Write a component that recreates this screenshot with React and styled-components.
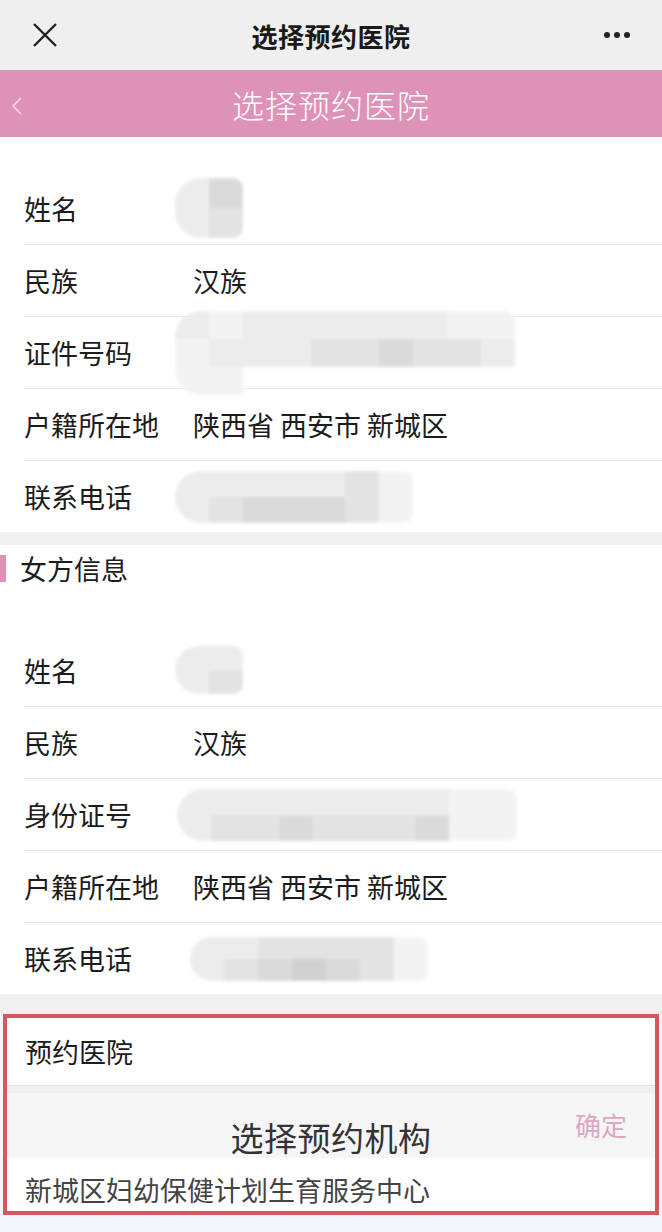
import React from "react"
import styled, { createGlobalStyle } from "styled-components"

const GlobalStyle = createGlobalStyle`
    body {
        margin: 0;
        background: #ffffff;
        font-family: "Noto Sans CJK SC", "Noto Sans", sans-serif;
        color: #222;
    }
    * {
        box-sizing: border-box;
    }
`

const Page = styled.div`
    width: 662px;
    height: 1232px;
    overflow: hidden;
    background: #f3f5f9;
    display: flex;
    flex-direction: column;
`

const TopBar = styled.div`
    height: 70px;
    background: #efefef;
    display: flex;
    align-items: center;
    justify-content: space-between;
    padding: 0 32px 0 32px;
    flex-shrink: 0;
`

const TopTitle = styled.div`
    font-size: 26px;
    font-weight: 700;
    color: #1a1a1a;
    letter-spacing: 0.5px;
`

const Dots = styled.div`
    display: flex;
    gap: 4px;
    width: 26px;
    span {
        width: 6px;
        height: 6px;
        border-radius: 50%;
        background: #222;
    }
`

const PinkBar = styled.div`
    height: 67px;
    background: #df92b8;
    display: flex;
    align-items: center;
    position: relative;
    flex-shrink: 0;
`

const PinkTitle = styled.div`
    flex: 1;
    text-align: center;
    color: #fff;
    font-size: 32px;
    font-weight: 300;
    letter-spacing: 1px;
`

const BackArrow = styled.svg`
    position: absolute;
    left: 11px;
    top: 27px;
`

const Section = styled.div`
    background: #fff;
    padding-top: ${p => p.$top || 0}px;
    flex-shrink: 0;
`

const Gap = styled.div`
    height: ${p => p.$h}px;
    background: #f0f0f0;
    flex-shrink: 0;
`

const Row = styled.div`
    display: flex;
    align-items: center;
    height: 72px;
    margin-left: 24px;
    & + & {
        border-top: 1px solid #e8e8e8;
    }
`

const Label = styled.div`
    width: 169px;
    font-size: 27px;
    color: #1c1c1c;
    flex-shrink: 0;
`

const Value = styled.div`
    font-size: 27px;
    color: #1c1c1c;
`

const SectionHead = styled.div`
    display: flex;
    align-items: center;
    height: 46px;
    gap: 14px;
    font-size: 27px;
    color: #1c1c1c;
    &::before {
        content: "";
        width: 6px;
        height: 27px;
        background: #df92b8;
    }
`

const HeadSpacer = styled.div`
    height: 43px;
`

const Mosaic = styled.div`
    display: grid;
    grid-template-columns: repeat(${p => p.$cols}, 34px);
    grid-auto-rows: ${p => p.$rowH || 26}px;
    margin-left: ${p => p.$offset || 0}px;
    border-radius: 26px 10px 10px 26px;
    overflow: hidden;
    filter: blur(1.5px);
    opacity: 0.95;
`

const Cell = styled.div`
    background: ${p => p.$c};
`

const Highlight = styled.div`
    margin: 0 3px;
    border: 4px solid #d4585f;
    background: #fff;
    display: flex;
    flex-direction: column;
    height: 201px;
    overflow: hidden;
    flex-shrink: 0;
`

const PlainRow = styled.div`
    height: 68px;
    display: flex;
    align-items: center;
    padding-left: 18px;
    font-size: 27px;
    color: #1c1c1c;
    border-bottom: 1px solid #e2e2e2;
    flex-shrink: 0;
`

const Divider = styled.div`
    height: 7px;
    background: #efefef;
    flex-shrink: 0;
`

const PickerHead = styled.div`
    height: 65px;
    background: #f5f5f5;
    position: relative;
    display: flex;
    justify-content: center;
    align-items: flex-end;
    flex-shrink: 0;
`

const PickerTitle = styled.div`
    font-size: 33px;
    color: #333;
    line-height: 1;
    margin-bottom: 4px;
    letter-spacing: 0.5px;
`

const Confirm = styled.div`
    position: absolute;
    right: 28px;
    top: 13px;
    font-size: 26px;
    color: #dca6c3;
`

const Option = styled.div`
    padding: 16px 0 0 18px;
    font-size: 27px;
    color: #444;
    line-height: 1.2;
`

const shades = {
    a: "#ececec",
    b: "#e2e2e2",
    c: "#d9d9d9",
    d: "#f3f3f3",
    e: "#cfcfcf",
}

const Blur = ({ cols, grid, offset, rowH }) => (
    <Mosaic $cols={cols} $offset={offset} $rowH={rowH}>
        {grid.split("").map((k, i) => <Cell key={i} $c={shades[k]} />)}
    </Mosaic>
)

const person = [
    { label: "姓名", blur: { cols: 2, grid: "acab", rowH: 30, offset: -18 } },
    { label: "民族", value: "汉族" },
    { label: "证件号码", blur: { cols: 10, grid: "adaaaaaadddaaabbcbbadd", rowH: 28, offset: -18 } },
    { label: "户籍所在地", value: "陕西省 西安市 新城区" },
    { label: "联系电话", blur: { cols: 7, grid: "aaaaabdabcccbd", rowH: 26, offset: -18 } },
]

const wife = [
    { label: "姓名", blur: { cols: 2, grid: "aaab", rowH: 24, offset: -18 } },
    { label: "民族", value: "汉族" },
    { label: "身份证号", blur: { cols: 10, grid: "aaaaaaaaddabbcbbbcdd", rowH: 26, offset: -16 } },
    { label: "户籍所在地", value: "陕西省 西安市 新城区" },
    { label: "联系电话", blur: { cols: 7, grid: "aabbbbdabcecbd", rowH: 22, offset: -3 } },
]

const InfoRows = ({ items }) => items.map(it => (
    <Row key={it.label}>
        <Label>{it.label}</Label>
        {it.value ? <Value>{it.value}</Value> : <Blur {...it.blur} />}
    </Row>
))

const App = () => {
    return (
        <Page>
            <GlobalStyle />
            <TopBar>
                <svg width="26" height="26" viewBox="0 0 26 26">
                    <path d="M2 2 L24 24 M24 2 L2 24" stroke="#222" strokeWidth="2.4" fill="none" />
                </svg>
                <TopTitle>选择预约医院</TopTitle>
                <Dots><span /><span /><span /></Dots>
            </TopBar>
            <PinkBar>
                <BackArrow width="12" height="18" viewBox="0 0 12 18">
                    <path d="M10 1 L2 9 L10 17" stroke="#f6dbe8" strokeWidth="1.6" fill="none" />
                </BackArrow>
                <PinkTitle>选择预约医院</PinkTitle>
            </PinkBar>
            <Section $top={35}>
                <InfoRows items={person} />
            </Section>
            <Gap $h={13} />
            <Section>
                <SectionHead>女方信息</SectionHead>
                <HeadSpacer />
                <InfoRows items={wife} />
            </Section>
            <Gap $h={20} />
            <Highlight>
                <PlainRow>预约医院</PlainRow>
                <Divider />
                <PickerHead>
                    <PickerTitle>选择预约机构</PickerTitle>
                    <Confirm>确定</Confirm>
                </PickerHead>
                <Option>新城区妇幼保健计划生育服务中心</Option>
            </Highlight>
        </Page>
    )
}

export default App
